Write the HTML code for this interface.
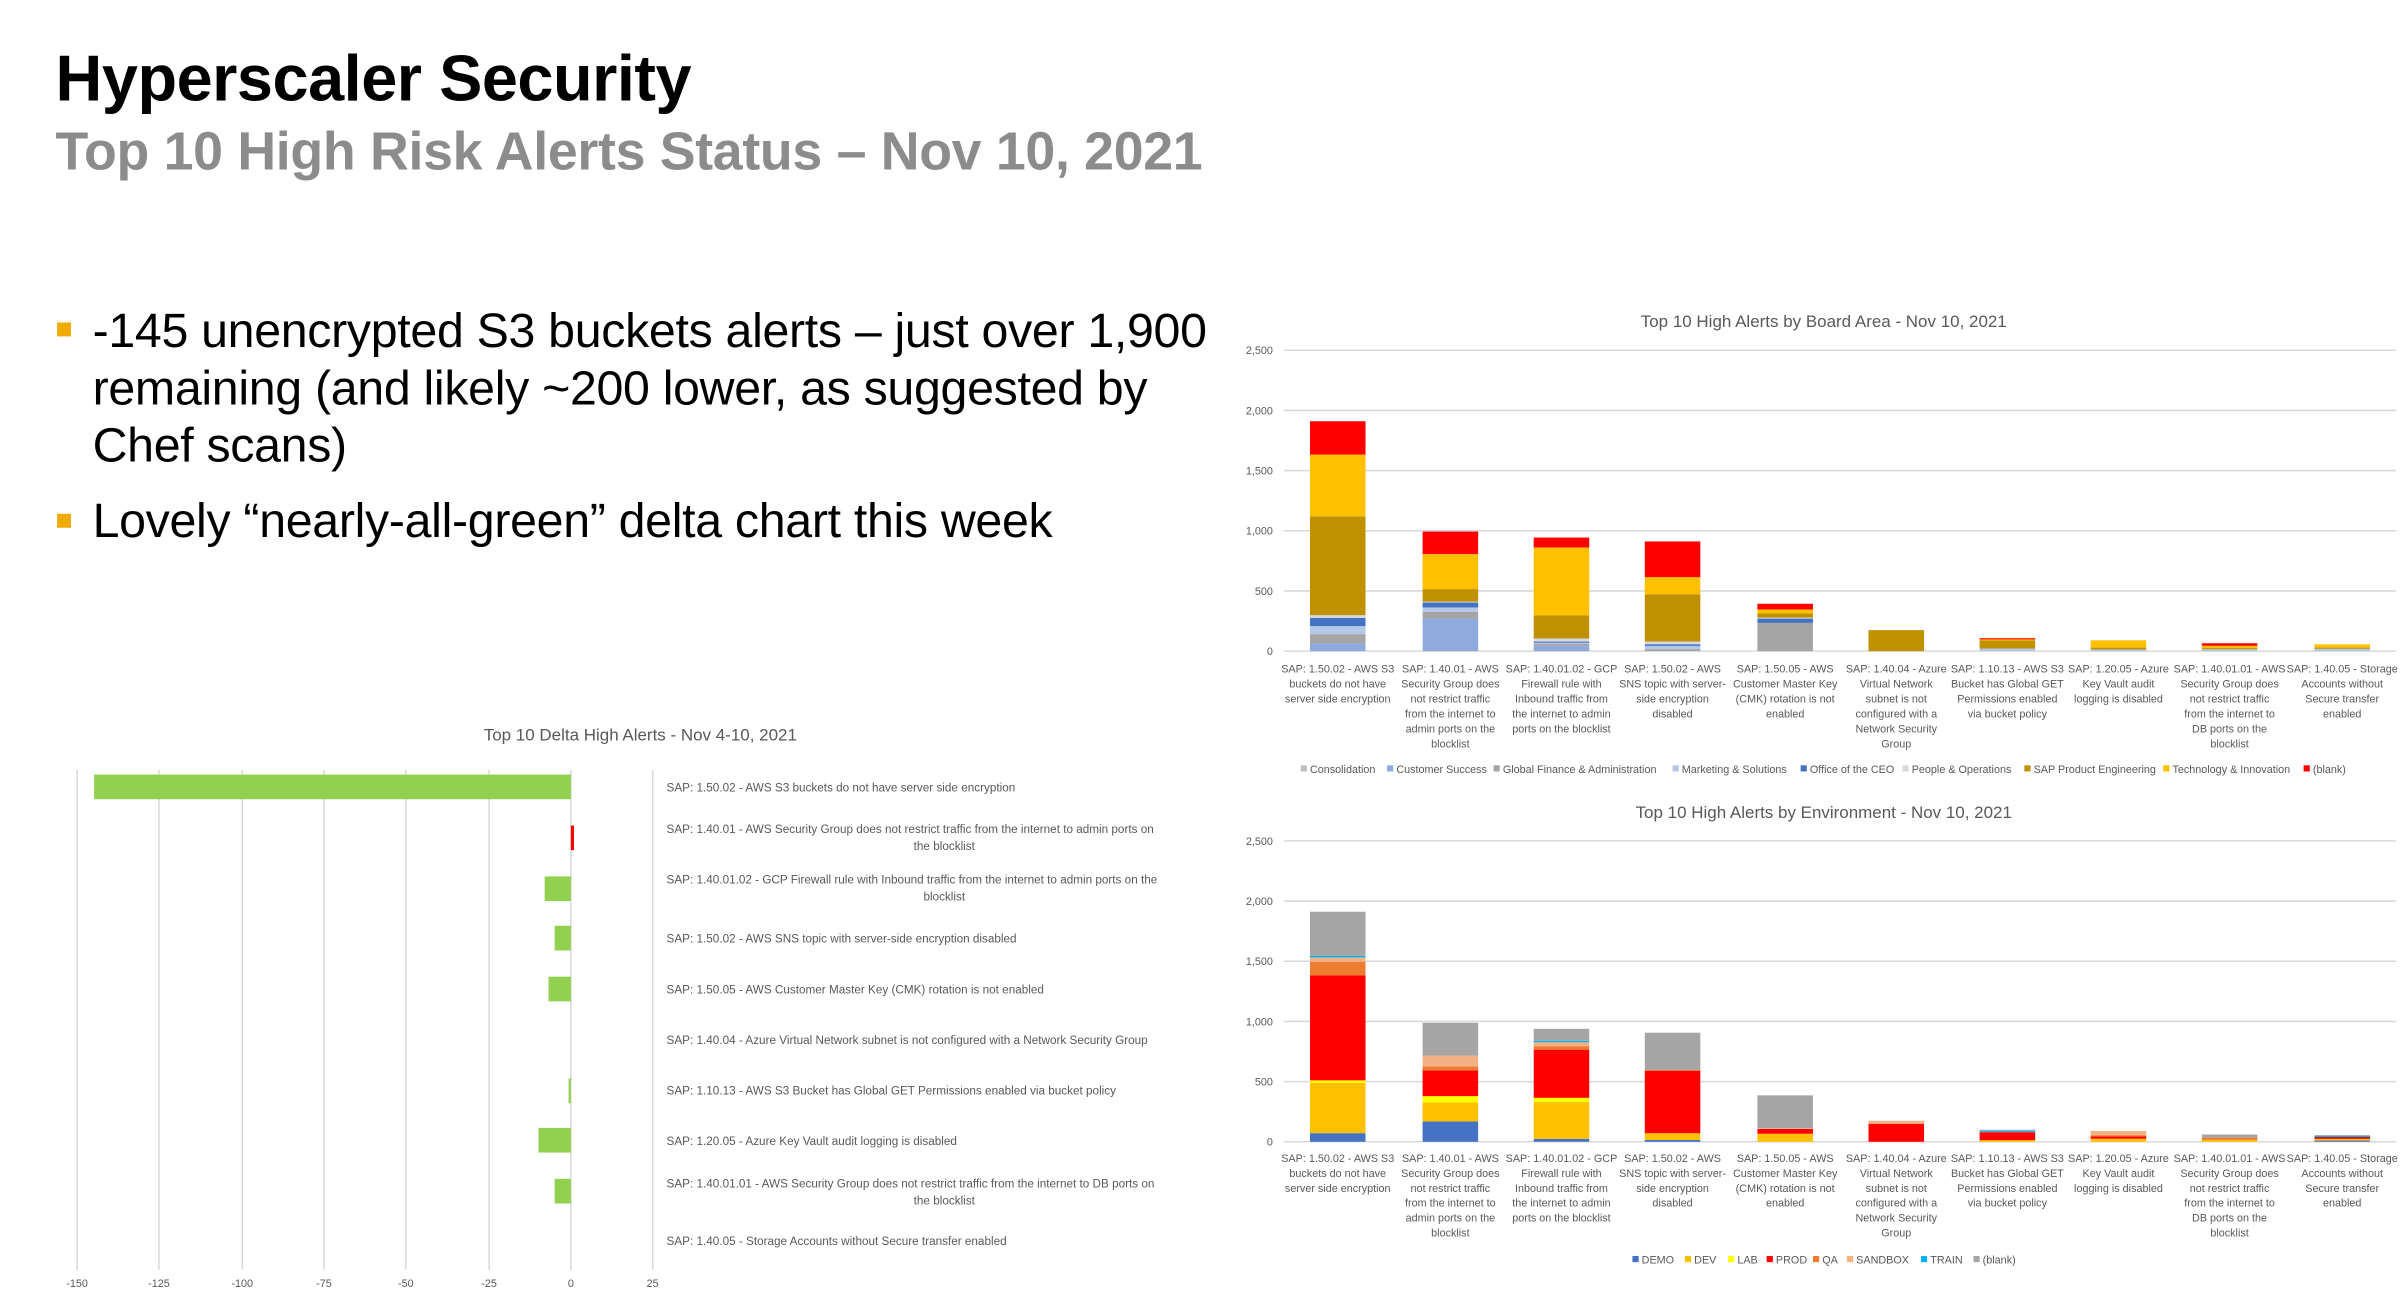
<!DOCTYPE html>
<html><head><meta charset="utf-8">
<style>
html,body{margin:0;padding:0;background:#fff;overflow:hidden;}
#wrap{width:1560px;height:841px;transform:scale(1.54295);transform-origin:0 0;position:relative;font-family:"Liberation Sans",sans-serif;}
h1{position:absolute;left:36px;top:27px;margin:0;font-size:42px;font-weight:bold;color:#000;letter-spacing:-0.3px;}
h2{position:absolute;left:36px;top:79px;margin:0;font-size:34.8px;font-weight:bold;color:#8c8c8c;letter-spacing:-0.2px;}
.b{position:absolute;left:60px;font-size:31.3px;color:#000;line-height:37px;width:740px;letter-spacing:-0.2px;}
.sq{position:absolute;left:37px;width:9px;height:9px;background:#f0ab00;}
svg{position:absolute;left:0;top:0;}
text{font-family:"Liberation Sans",sans-serif;fill:#595959;}
</style></head><body><div id="wrap">
<h1>Hyperscaler Security</h1>
<h2>Top 10 High Risk Alerts Status – Nov 10, 2021</h2>
<div class="sq" style="top:209px"></div>
<div class="b" style="top:196px">-145 unencrypted S3 buckets alerts – just over 1,900 remaining (and likely ~200 lower, as suggested by Chef scans)</div>
<div class="sq" style="top:333px"></div>
<div class="b" style="top:319px">Lovely “nearly-all-green” delta chart this week</div>

<svg width="1560" height="841" viewBox="0 0 1560 841">
<g transform="translate(-3,-2)">
<text x="1185" y="214" font-size="11" text-anchor="middle">Top 10 High Alerts by Board Area - Nov 10, 2021</text>
<g stroke="#d9d9d9" stroke-width="1">
<line x1="835" y1="229" x2="1556" y2="229"/><line x1="835" y1="268" x2="1556" y2="268"/><line x1="835" y1="307" x2="1556" y2="307"/><line x1="835" y1="346" x2="1556" y2="346"/><line x1="835" y1="385" x2="1556" y2="385"/><line x1="835" y1="424" x2="1556" y2="424"/>
</g>
<g font-size="7" text-anchor="end">
<text x="828" y="231.5">2,500</text><text x="828" y="270.5">2,000</text><text x="828" y="309.5">1,500</text><text x="828" y="348.5">1,000</text><text x="828" y="387.5">500</text><text x="828" y="426.5">0</text>
</g>
<g>
<rect x="852" y="419" width="36" height="5" fill="#8faadc"/>
<rect x="852" y="413" width="36" height="6" fill="#a5a5a5"/>
<rect x="852" y="407.8" width="36" height="5.2" fill="#b4c7e7"/>
<rect x="852" y="402.4" width="36" height="5.4" fill="#4472c4"/>
<rect x="852" y="400.7" width="36" height="1.7" fill="#d9d9d9"/>
<rect x="852" y="336.6" width="36" height="64.1" fill="#bf9000"/>
<rect x="852" y="296.6" width="36" height="40" fill="#ffc000"/>
<rect x="852" y="275" width="36" height="21.6" fill="#ff0000"/>
<rect x="925" y="402.9" width="36" height="21.1" fill="#8faadc"/>
<rect x="925" y="398.5" width="36" height="4.4" fill="#a5a5a5"/>
<rect x="925" y="395.7" width="36" height="2.8" fill="#b4c7e7"/>
<rect x="925" y="392.5" width="36" height="3.2" fill="#4472c4"/>
<rect x="925" y="391.9" width="36" height="0.6" fill="#d9d9d9"/>
<rect x="925" y="383.8" width="36" height="8.1" fill="#bf9000"/>
<rect x="925" y="361.1" width="36" height="22.7" fill="#ffc000"/>
<rect x="925" y="346.5" width="36" height="14.6" fill="#ff0000"/>
<rect x="997" y="420.6" width="36" height="3.4" fill="#8faadc"/>
<rect x="997" y="419.2" width="36" height="1.4" fill="#a5a5a5"/>
<rect x="997" y="418.6" width="36" height="0.6" fill="#b4c7e7"/>
<rect x="997" y="417.8" width="36" height="0.8" fill="#4472c4"/>
<rect x="997" y="415.8" width="36" height="2" fill="#d9d9d9"/>
<rect x="997" y="400.9" width="36" height="14.9" fill="#bf9000"/>
<rect x="997" y="356.8" width="36" height="44.1" fill="#ffc000"/>
<rect x="997" y="350.4" width="36" height="6.4" fill="#ff0000"/>
<rect x="1069" y="422.7" width="36" height="1.3" fill="#a5a5a5"/>
<rect x="1069" y="420.6" width="36" height="2.1" fill="#b4c7e7"/>
<rect x="1069" y="419.5" width="36" height="1.1" fill="#4472c4"/>
<rect x="1069" y="417.8" width="36" height="1.7" fill="#d9d9d9"/>
<rect x="1069" y="387.1" width="36" height="30.7" fill="#bf9000"/>
<rect x="1069" y="376" width="36" height="11.1" fill="#ffc000"/>
<rect x="1069" y="352.9" width="36" height="23.1" fill="#ff0000"/>
<rect x="1142" y="405.7" width="36" height="18.3" fill="#a5a5a5"/>
<rect x="1142" y="402.9" width="36" height="2.8" fill="#4472c4"/>
<rect x="1142" y="402.2" width="36" height="0.7" fill="#d9d9d9"/>
<rect x="1142" y="399.6" width="36" height="2.6" fill="#bf9000"/>
<rect x="1142" y="397" width="36" height="2.6" fill="#ffc000"/>
<rect x="1142" y="393.3" width="36" height="3.7" fill="#ff0000"/>
<rect x="1214" y="410.4" width="36" height="13.6" fill="#bf9000"/>
<rect x="1286" y="422.3" width="36" height="1.7" fill="#b4c7e7"/>
<rect x="1286" y="417" width="36" height="5.3" fill="#bf9000"/>
<rect x="1286" y="416.4" width="36" height="0.6" fill="#ffc000"/>
<rect x="1286" y="415.6" width="36" height="0.8" fill="#ff0000"/>
<rect x="1358" y="422.8" width="36" height="1.2" fill="#b4c7e7"/>
<rect x="1358" y="421.7" width="36" height="1.2" fill="#bf9000"/>
<rect x="1358" y="417" width="36" height="4.7" fill="#ffc000"/>
<rect x="1430" y="422.8" width="36" height="1.2" fill="#b4c7e7"/>
<rect x="1430" y="422" width="36" height="0.8" fill="#bf9000"/>
<rect x="1430" y="420.5" width="36" height="1.6" fill="#ffc000"/>
<rect x="1430" y="418.9" width="36" height="1.6" fill="#ff0000"/>
<rect x="1503" y="422.4" width="36" height="1.6" fill="#b4c7e7"/>
<rect x="1503" y="421.7" width="36" height="0.8" fill="#bf9000"/>
<rect x="1503" y="419.6" width="36" height="2.1" fill="#ffc000"/>
</g>
<g font-size="7" text-anchor="middle">
<text x="870" y="438">SAP: 1.50.02 - AWS S3</text><text x="870" y="447.7">buckets do not have</text><text x="870" y="457.4">server side encryption</text>
<text x="943" y="438">SAP: 1.40.01 - AWS</text><text x="943" y="447.7">Security Group does</text><text x="943" y="457.4">not restrict traffic</text><text x="943" y="467.1">from the internet to</text><text x="943" y="476.8">admin ports on the</text><text x="943" y="486.5">blocklist</text>
<text x="1015" y="438">SAP: 1.40.01.02 - GCP</text><text x="1015" y="447.7">Firewall rule with</text><text x="1015" y="457.4">Inbound traffic from</text><text x="1015" y="467.1">the internet to admin</text><text x="1015" y="476.8">ports on the blocklist</text>
<text x="1087" y="438">SAP: 1.50.02 - AWS</text><text x="1087" y="447.7">SNS topic with server-</text><text x="1087" y="457.4">side encryption</text><text x="1087" y="467.1">disabled</text>
<text x="1160" y="438">SAP: 1.50.05 - AWS</text><text x="1160" y="447.7">Customer Master Key</text><text x="1160" y="457.4">(CMK) rotation is not</text><text x="1160" y="467.1">enabled</text>
<text x="1232" y="438">SAP: 1.40.04 - Azure</text><text x="1232" y="447.7">Virtual Network</text><text x="1232" y="457.4">subnet is not</text><text x="1232" y="467.1">configured with a</text><text x="1232" y="476.8">Network Security</text><text x="1232" y="486.5">Group</text>
<text x="1304" y="438">SAP: 1.10.13 - AWS S3</text><text x="1304" y="447.7">Bucket has Global GET</text><text x="1304" y="457.4">Permissions enabled</text><text x="1304" y="467.1">via bucket policy</text>
<text x="1376" y="438">SAP: 1.20.05 - Azure</text><text x="1376" y="447.7">Key Vault audit</text><text x="1376" y="457.4">logging is disabled</text>
<text x="1448" y="438">SAP: 1.40.01.01 - AWS</text><text x="1448" y="447.7">Security Group does</text><text x="1448" y="457.4">not restrict traffic</text><text x="1448" y="467.1">from the internet to</text><text x="1448" y="476.8">DB ports on the</text><text x="1448" y="486.5">blocklist</text>
<text x="1521" y="438">SAP: 1.40.05 - Storage</text><text x="1521" y="447.7">Accounts without</text><text x="1521" y="457.4">Secure transfer</text><text x="1521" y="467.1">enabled</text>
</g>
<g font-size="7">
<rect x="846" y="498" width="4" height="4" fill="#bfbfbf"/><text x="852" y="503">Consolidation</text>
<rect x="902" y="498" width="4" height="4" fill="#8faadc"/><text x="908" y="503">Customer Success</text>
<rect x="971" y="498" width="4" height="4" fill="#a5a5a5"/><text x="977" y="503">Global Finance &amp; Administration</text>
<rect x="1087" y="498" width="4" height="4" fill="#b4c7e7"/><text x="1093" y="503">Marketing &amp; Solutions</text>
<rect x="1170" y="498" width="4" height="4" fill="#4472c4"/><text x="1176" y="503">Office of the CEO</text>
<rect x="1236" y="498" width="4" height="4" fill="#d9d9d9"/><text x="1242" y="503">People &amp; Operations</text>
<rect x="1315" y="498" width="4" height="4" fill="#bf9000"/><text x="1321" y="503">SAP Product Engineering</text>
<rect x="1405" y="498" width="4" height="4" fill="#ffc000"/><text x="1411" y="503">Technology &amp; Innovation</text>
<rect x="1496" y="498" width="4" height="4" fill="#ff0000"/><text x="1502" y="503">(blank)</text>
</g>

<text x="1185" y="532" font-size="11" text-anchor="middle">Top 10 High Alerts by Environment - Nov 10, 2021</text>
<g stroke="#d9d9d9" stroke-width="1">
<line x1="835" y1="547" x2="1556" y2="547"/><line x1="835" y1="586" x2="1556" y2="586"/><line x1="835" y1="625" x2="1556" y2="625"/><line x1="835" y1="664" x2="1556" y2="664"/><line x1="835" y1="703" x2="1556" y2="703"/><line x1="835" y1="742" x2="1556" y2="742"/>
</g>
<g font-size="7" text-anchor="end">
<text x="828" y="549.5">2,500</text><text x="828" y="588.5">2,000</text><text x="828" y="627.5">1,500</text><text x="828" y="666.5">1,000</text><text x="828" y="705.5">500</text><text x="828" y="744.5">0</text>
</g>
<g>
<rect x="852" y="736.4" width="36" height="5.6" fill="#4472c4"/>
<rect x="852" y="703.9" width="36" height="32.5" fill="#ffc000"/>
<rect x="852" y="702.2" width="36" height="1.7" fill="#ffff00"/>
<rect x="852" y="634.2" width="36" height="68" fill="#ff0000"/>
<rect x="852" y="625.3" width="36" height="8.9" fill="#ed7d31"/>
<rect x="852" y="622.5" width="36" height="2.8" fill="#f4b183"/>
<rect x="852" y="621.4" width="36" height="1.1" fill="#00b0f0"/>
<rect x="852" y="592.9" width="36" height="28.5" fill="#a5a5a5"/>
<rect x="925" y="728.8" width="36" height="13.2" fill="#4472c4"/>
<rect x="925" y="716.5" width="36" height="12.3" fill="#ffc000"/>
<rect x="925" y="712.4" width="36" height="4.1" fill="#ffff00"/>
<rect x="925" y="695.7" width="36" height="16.7" fill="#ff0000"/>
<rect x="925" y="693.1" width="36" height="2.6" fill="#ed7d31"/>
<rect x="925" y="686.2" width="36" height="6.9" fill="#f4b183"/>
<rect x="925" y="664.9" width="36" height="21.3" fill="#a5a5a5"/>
<rect x="997" y="740.1" width="36" height="1.9" fill="#4472c4"/>
<rect x="997" y="716.3" width="36" height="23.8" fill="#ffc000"/>
<rect x="997" y="713.5" width="36" height="2.8" fill="#ffff00"/>
<rect x="997" y="682.3" width="36" height="31.2" fill="#ff0000"/>
<rect x="997" y="680" width="36" height="2.3" fill="#ed7d31"/>
<rect x="997" y="677.5" width="36" height="2.5" fill="#f4b183"/>
<rect x="997" y="676.6" width="36" height="0.9" fill="#00b0f0"/>
<rect x="997" y="668.8" width="36" height="7.8" fill="#a5a5a5"/>
<rect x="1069" y="740.8" width="36" height="1.2" fill="#4472c4"/>
<rect x="1069" y="736.4" width="36" height="4.4" fill="#ffc000"/>
<rect x="1069" y="695.9" width="36" height="40.5" fill="#ff0000"/>
<rect x="1069" y="695.4" width="36" height="0.5" fill="#ed7d31"/>
<rect x="1069" y="671.3" width="36" height="24.1" fill="#a5a5a5"/>
<rect x="1142" y="736.8" width="36" height="5.2" fill="#ffc000"/>
<rect x="1142" y="733.6" width="36" height="3.2" fill="#ff0000"/>
<rect x="1142" y="733.2" width="36" height="0.4" fill="#f4b183"/>
<rect x="1142" y="711.9" width="36" height="21.3" fill="#a5a5a5"/>
<rect x="1214" y="730.3" width="36" height="11.7" fill="#ff0000"/>
<rect x="1214" y="728.4" width="36" height="1.9" fill="#f4b183"/>
<rect x="1286" y="740.8" width="36" height="1.2" fill="#ffc000"/>
<rect x="1286" y="735.8" width="36" height="5.1" fill="#ff0000"/>
<rect x="1286" y="735" width="36" height="0.8" fill="#00b0f0"/>
<rect x="1286" y="734.2" width="36" height="0.8" fill="#a5a5a5"/>
<rect x="1358" y="740" width="36" height="2" fill="#ffc000"/>
<rect x="1358" y="738.5" width="36" height="1.5" fill="#ff0000"/>
<rect x="1358" y="737.7" width="36" height="0.8" fill="#ed7d31"/>
<rect x="1358" y="735" width="36" height="2.7" fill="#f4b183"/>
<rect x="1430" y="740.8" width="36" height="1.2" fill="#ffc000"/>
<rect x="1430" y="739.3" width="36" height="1.5" fill="#ed7d31"/>
<rect x="1430" y="737.3" width="36" height="2" fill="#a5a5a5"/>
<rect x="1503" y="741.2" width="36" height="0.8" fill="#4472c4"/>
<rect x="1503" y="740" width="36" height="1.2" fill="#ffc000"/>
<rect x="1503" y="738.9" width="36" height="1.2" fill="#ff0000"/>
<rect x="1503" y="738.1" width="36" height="0.8" fill="#00b0f0"/>
<rect x="1503" y="737.6" width="36" height="0.5" fill="#a5a5a5"/>
</g>
<g font-size="7" text-anchor="middle">
<text x="870" y="755">SAP: 1.50.02 - AWS S3</text><text x="870" y="764.7">buckets do not have</text><text x="870" y="774.4">server side encryption</text>
<text x="943" y="755">SAP: 1.40.01 - AWS</text><text x="943" y="764.7">Security Group does</text><text x="943" y="774.4">not restrict traffic</text><text x="943" y="784.1">from the internet to</text><text x="943" y="793.8">admin ports on the</text><text x="943" y="803.5">blocklist</text>
<text x="1015" y="755">SAP: 1.40.01.02 - GCP</text><text x="1015" y="764.7">Firewall rule with</text><text x="1015" y="774.4">Inbound traffic from</text><text x="1015" y="784.1">the internet to admin</text><text x="1015" y="793.8">ports on the blocklist</text>
<text x="1087" y="755">SAP: 1.50.02 - AWS</text><text x="1087" y="764.7">SNS topic with server-</text><text x="1087" y="774.4">side encryption</text><text x="1087" y="784.1">disabled</text>
<text x="1160" y="755">SAP: 1.50.05 - AWS</text><text x="1160" y="764.7">Customer Master Key</text><text x="1160" y="774.4">(CMK) rotation is not</text><text x="1160" y="784.1">enabled</text>
<text x="1232" y="755">SAP: 1.40.04 - Azure</text><text x="1232" y="764.7">Virtual Network</text><text x="1232" y="774.4">subnet is not</text><text x="1232" y="784.1">configured with a</text><text x="1232" y="793.8">Network Security</text><text x="1232" y="803.5">Group</text>
<text x="1304" y="755">SAP: 1.10.13 - AWS S3</text><text x="1304" y="764.7">Bucket has Global GET</text><text x="1304" y="774.4">Permissions enabled</text><text x="1304" y="784.1">via bucket policy</text>
<text x="1376" y="755">SAP: 1.20.05 - Azure</text><text x="1376" y="764.7">Key Vault audit</text><text x="1376" y="774.4">logging is disabled</text>
<text x="1448" y="755">SAP: 1.40.01.01 - AWS</text><text x="1448" y="764.7">Security Group does</text><text x="1448" y="774.4">not restrict traffic</text><text x="1448" y="784.1">from the internet to</text><text x="1448" y="793.8">DB ports on the</text><text x="1448" y="803.5">blocklist</text>
<text x="1521" y="755">SAP: 1.40.05 - Storage</text><text x="1521" y="764.7">Accounts without</text><text x="1521" y="774.4">Secure transfer</text><text x="1521" y="784.1">enabled</text>
</g>
<g font-size="7">
<rect x="1061" y="816" width="4" height="4" fill="#4472c4"/><text x="1067" y="821">DEMO</text>
<rect x="1095" y="816" width="4" height="4" fill="#ffc000"/><text x="1101" y="821">DEV</text>
<rect x="1123" y="816" width="4" height="4" fill="#ffff00"/><text x="1129" y="821">LAB</text>
<rect x="1148" y="816" width="4" height="4" fill="#ff0000"/><text x="1154" y="821">PROD</text>
<rect x="1178" y="816" width="4" height="4" fill="#ed7d31"/><text x="1184" y="821">QA</text>
<rect x="1200" y="816" width="4" height="4" fill="#f4b183"/><text x="1206" y="821">SANDBOX</text>
<rect x="1248" y="816" width="4" height="4" fill="#00b0f0"/><text x="1254" y="821">TRAIN</text>
<rect x="1282" y="816" width="4" height="4" fill="#a5a5a5"/><text x="1288" y="821">(blank)</text>
</g>
</g>

<g transform="translate(-1,-3)">
<text x="416" y="483" font-size="11" text-anchor="middle">Top 10 Delta High Alerts - Nov 4-10, 2021</text>
<g stroke="#d9d9d9" stroke-width="1">
<line x1="51" y1="502" x2="51" y2="826"/><line x1="104" y1="502" x2="104" y2="826"/><line x1="158" y1="502" x2="158" y2="826"/><line x1="211" y1="502" x2="211" y2="826"/><line x1="264" y1="502" x2="264" y2="826"/><line x1="318" y1="502" x2="318" y2="826"/><line x1="371" y1="502" x2="371" y2="826"/><line x1="424" y1="502" x2="424" y2="826"/>
</g>
<g>
<rect x="62" y="505" width="309" height="16" fill="#92d050"/>
<rect x="371" y="538" width="2" height="16" fill="#ff0000"/>
<rect x="354" y="571" width="17" height="16" fill="#92d050"/>
<rect x="360.5" y="603" width="10.5" height="16" fill="#92d050"/>
<rect x="356.5" y="636" width="14.5" height="16" fill="#92d050"/>
<rect x="369.5" y="702" width="1.5" height="16" fill="#92d050"/>
<rect x="350" y="734" width="21" height="16" fill="#92d050"/>
<rect x="360.5" y="767" width="10.5" height="16" fill="#92d050"/>
</g>
<g font-size="7" text-anchor="middle">
<text x="51" y="837">-150</text><text x="104" y="837">-125</text><text x="158" y="837">-100</text><text x="211" y="837">-75</text><text x="264" y="837">-50</text><text x="318" y="837">-25</text><text x="371" y="837">0</text><text x="424" y="837">25</text>
</g>
<g font-size="7.6">
<text x="433" y="516">SAP: 1.50.02 - AWS S3 buckets do not have server side encryption</text>
<text x="433" y="543">SAP: 1.40.01 - AWS Security Group does not restrict traffic from the internet to admin ports on</text>
<text x="613" y="554" text-anchor="middle">the blocklist</text>
<text x="433" y="575.5">SAP: 1.40.01.02 - GCP Firewall rule with Inbound traffic from the internet to admin ports on the</text>
<text x="613" y="586.5" text-anchor="middle">blocklist</text>
<text x="433" y="614">SAP: 1.50.02 - AWS SNS topic with server-side encryption disabled</text>
<text x="433" y="647">SAP: 1.50.05 - AWS Customer Master Key (CMK) rotation is not enabled</text>
<text x="433" y="679.5">SAP: 1.40.04 - Azure Virtual Network subnet is not configured with a Network Security Group</text>
<text x="433" y="712.5">SAP: 1.10.13 - AWS S3 Bucket has Global GET Permissions enabled via bucket policy</text>
<text x="433" y="745">SAP: 1.20.05 - Azure Key Vault audit logging is disabled</text>
<text x="433" y="772.5">SAP: 1.40.01.01 - AWS Security Group does not restrict traffic from the internet to DB ports on</text>
<text x="613" y="783.5" text-anchor="middle">the blocklist</text>
<text x="433" y="810">SAP: 1.40.05 - Storage Accounts without Secure transfer enabled</text>
</g>
</g>
</svg>
</div></body></html>
